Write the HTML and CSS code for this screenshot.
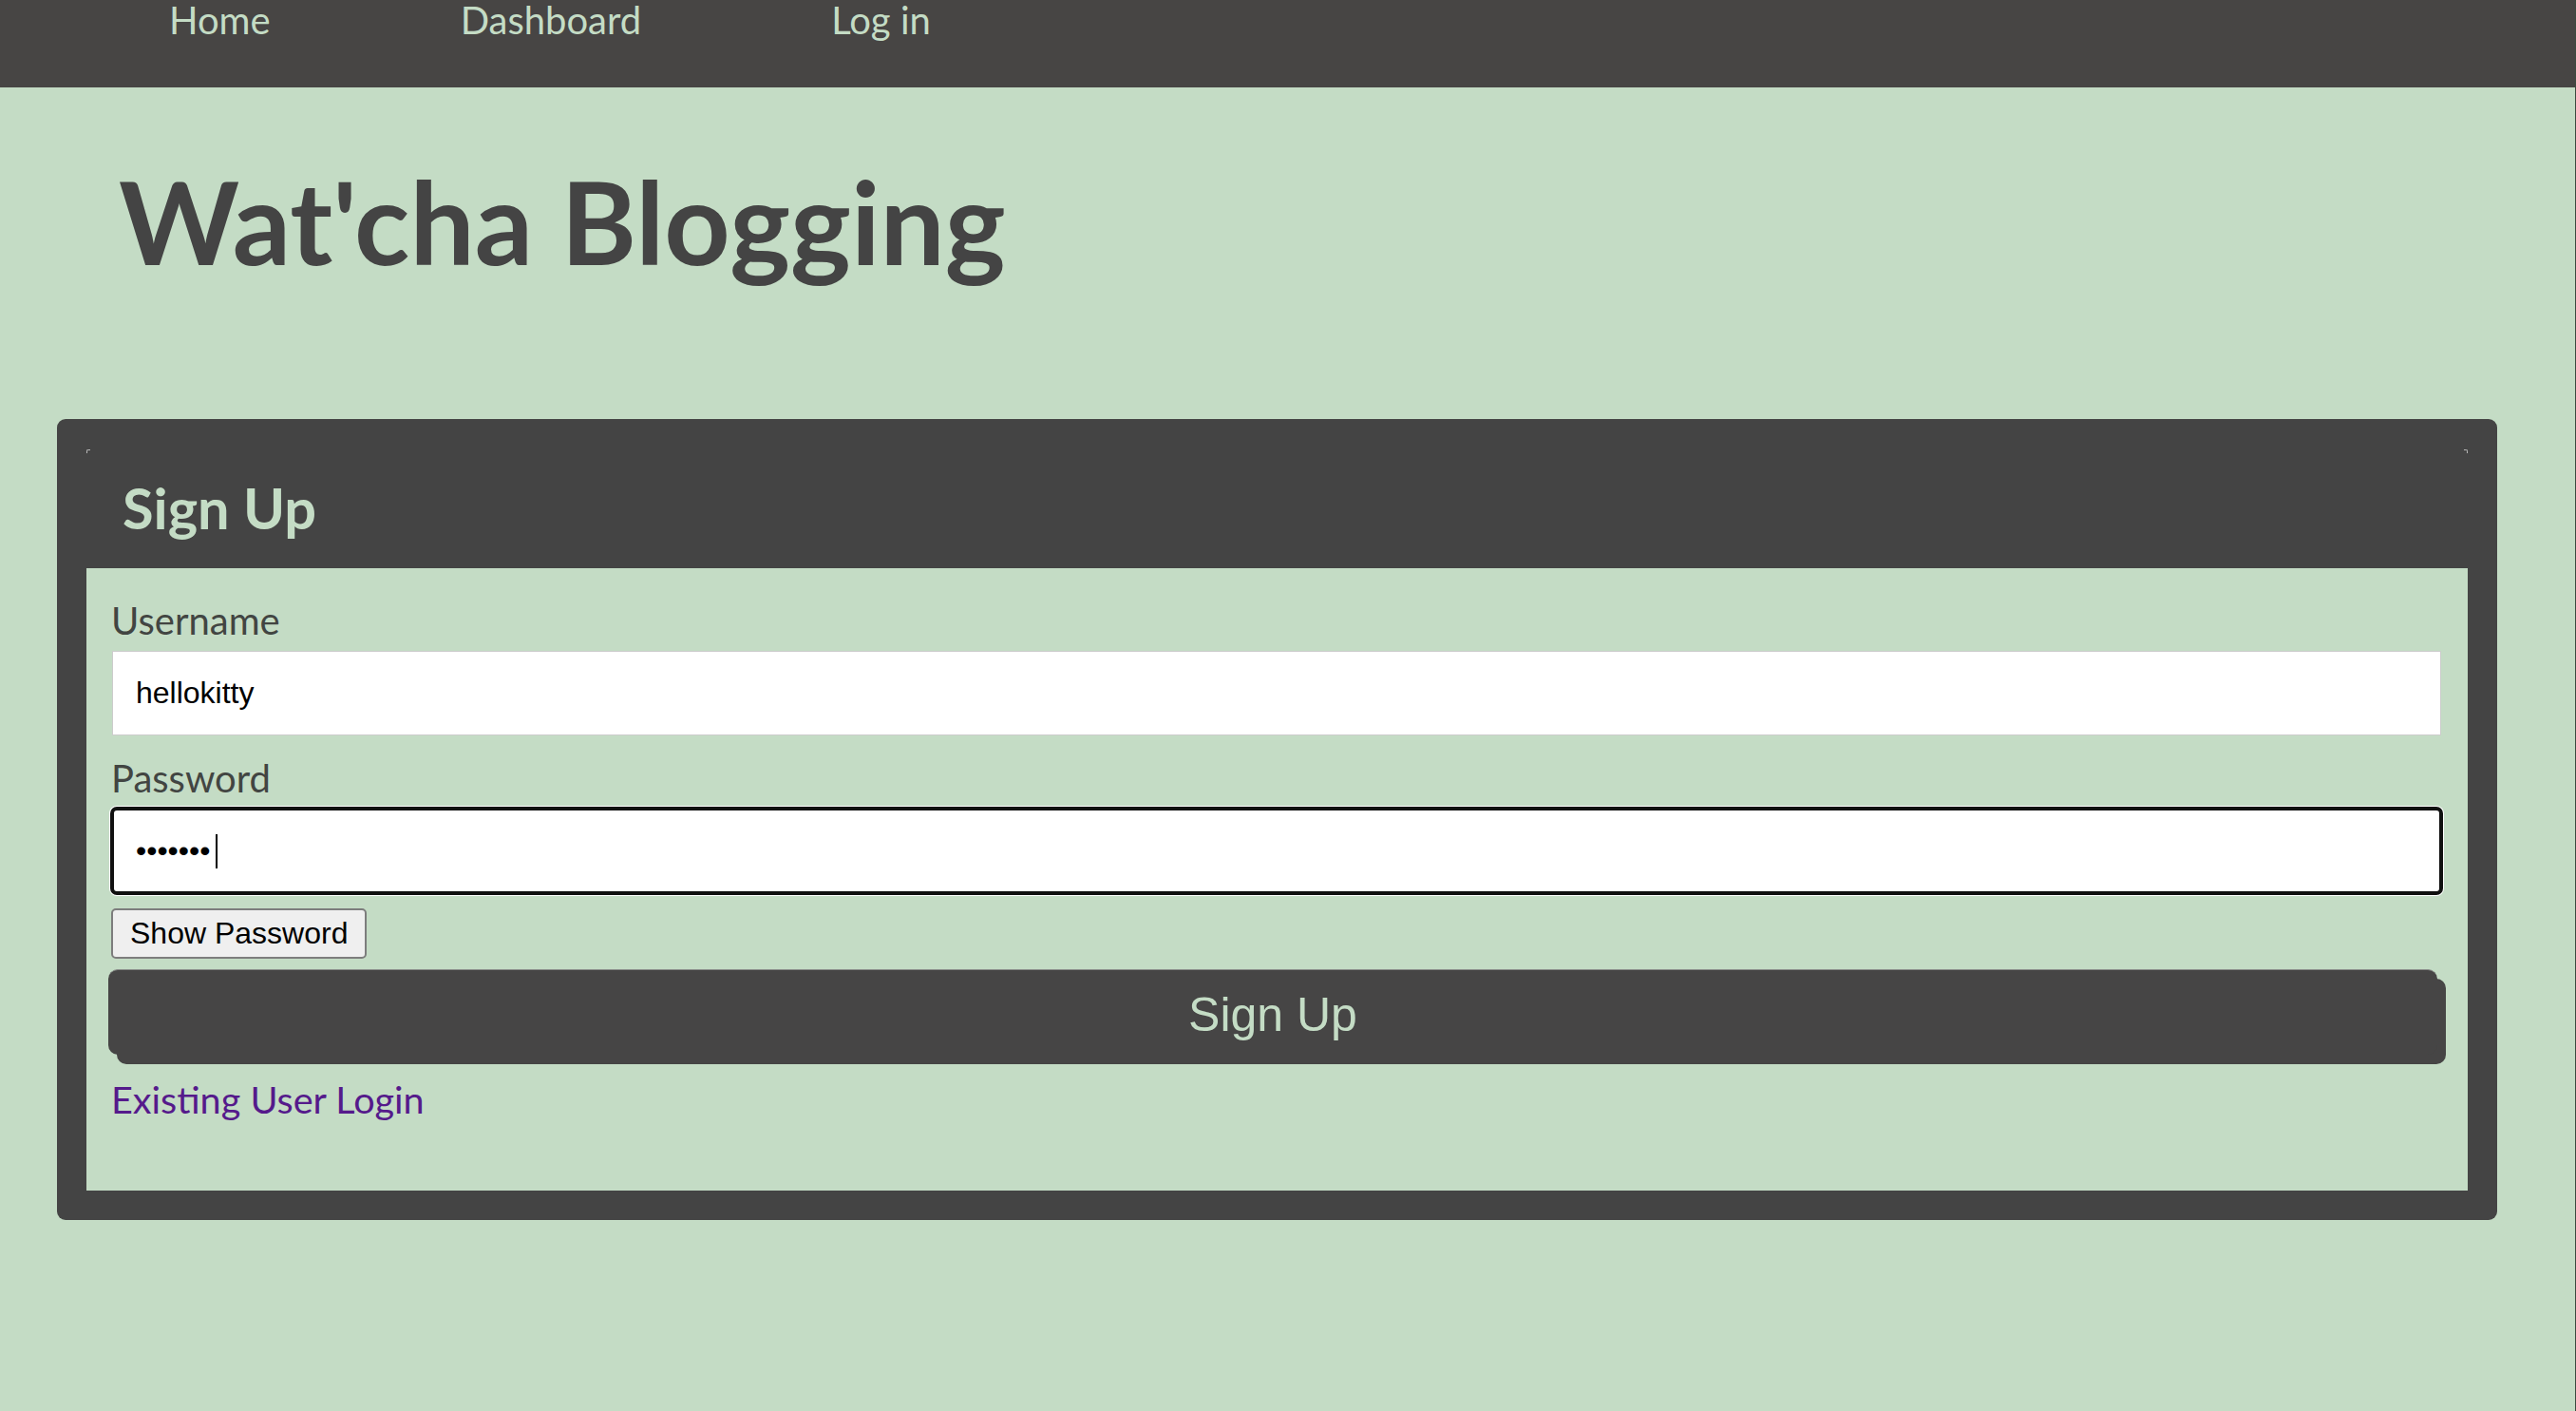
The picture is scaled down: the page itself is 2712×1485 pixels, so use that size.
FILE: index.html
```html
<!DOCTYPE html>
<html lang="en">
<head>
<meta charset="utf-8">
<title>Wat'cha Blogging - Sign Up</title>
<link rel="stylesheet" href="styles.css">
</head>
<body>
<nav class="topnav">
  <a class="topnav__link" href="#">Home</a>
  <a class="topnav__link" href="#">Dashboard</a>
  <a class="topnav__link" href="#">Log in</a>
</nav>
<header class="masthead">
  <h1 class="masthead__title">Wat'cha Blogging</h1>
</header>
<main class="card">
  <div class="card__head">
    <h2 class="card__title">Sign Up</h2>
  </div>
  <form class="card__body">
    <label class="field-label" for="username">Username</label>
    <input class="field" id="username" type="text" value="hellokitty">
    <label class="field-label field-label--spaced" for="password">Password</label>
    <div class="field-wrap">
      <input class="field field--focused" id="password" type="password" value="abcdefg">
      <span class="field-caret"></span>
    </div>
    <button class="toggle-btn" type="button">Show Password</button>
    <button class="submit-btn" type="button">Sign Up</button>
    <a class="switch-link" href="#">Existing User Login</a>
  </form>
</main>
</body>
</html>
```
FILE: styles.css
```css
html {
  background: #c4dcc5;
  border-right: 1px solid #3c4a3f;
  min-height: 100vh;
  box-sizing: border-box;
}
body {
  margin: 0;
  font-family: Lato, "Open Sans", sans-serif;
  color: #444444;
}
.topnav {
  display: flex;
  gap: 200px;
  height: 92px;
  padding-left: 178px;
  background: #474544;
}
.topnav__link {
  font-family: Lato, sans-serif;
  font-size: 40px;
  line-height: 43px;
  color: #c4dcc5;
  text-decoration: none;
}
.masthead {
  padding: 67px 0 0 125px;
}
.masthead__title {
  margin: 0;
  font-family: Lato, sans-serif;
  font-weight: 700;
  font-size: 121px;
  line-height: 148px;
  color: #444444;
}
.card {
  display: block;
  margin: 134px 0 0 60px;
  width: 2569px;
  box-sizing: border-box;
  padding: 0 31px 31px;
  background: #444444;
  border-radius: 9px;
}
.card__head {
  position: relative;
  padding: 58px 0 28px 38px;
}
.card__head::before,
.card__head::after {
  content: "";
  position: absolute;
  top: 32px;
  width: 3px;
  height: 3px;
  border-top: 1px solid #b9b9b9;
}
.card__head::before {
  left: 0;
  border-left: 1px solid #b9b9b9;
  border-top-left-radius: 2px;
}
.card__head::after {
  right: 0;
  border-right: 1px solid #b9b9b9;
  border-top-right-radius: 2px;
}
.card__title {
  margin: 0;
  font-family: Lato, sans-serif;
  font-weight: 700;
  font-size: 59.5px;
  line-height: 71px;
  color: #c4dcc5;
}
.card__body {
  display: flex;
  flex-direction: column;
  align-items: flex-start;
  margin: 0;
  padding: 30.5px 27px 73px 26px;
  background: #c4dcc5;
}
.field-label {
  font-family: Lato, sans-serif;
  font-size: 40px;
  line-height: 48px;
  color: #424542;
  margin-bottom: 8px;
}
.field-label--spaced {
  margin-top: 21px;
}
.field {
  display: block;
  width: 2452px;
  height: 89px;
  box-sizing: border-box;
  margin: 0 0 0 1px;
  padding: 0 24px;
  border: 1px solid #cccccc;
  background: #ffffff;
  font-family: "Liberation Sans", Arial, sans-serif;
  font-size: 32px;
  color: #000000;
  outline: none;
}
.field-wrap {
  position: relative;
  margin-left: 1px;
}
.field-wrap .field {
  margin: 0;
}
.field--focused {
  height: 89px;
  padding: 0 23px;
  border: 2px solid #101010;
  border-radius: 5px;
  box-shadow: 0 0 0 2px #101010, 0 0 0 3px #ffffff;
}
.field-caret {
  position: absolute;
  left: 109px;
  top: 27px;
  width: 2px;
  height: 36px;
  background: #000000;
}
.toggle-btn {
  margin: 16px 0 0 0;
  height: 53px;
  padding: 0 18px;
  border: 2px solid #7d7d7d;
  border-radius: 5px;
  background: #efefef;
  font-family: "Liberation Sans", Arial, sans-serif;
  font-size: 32px;
  color: #000000;
}
.submit-btn {
  margin: 11.5px 0 0 -3px;
  width: 2452px;
  height: 90px;
  padding: 4px 0 0;
  border: 0;
  border-top: 1px solid #8a8c8a;
  border-radius: 10px;
  background: #464545;
  box-shadow: 9px 10px 0 #464545;
  font-family: "Liberation Sans", Arial, sans-serif;
  font-size: 50px;
  color: #c4dcc5;
}
.switch-link {
  margin-top: 22.5px;
  font-family: Lato, sans-serif;
  font-size: 39.6px;
  line-height: 47.5px;
  color: #551a8b;
  text-decoration: none;
}
```
